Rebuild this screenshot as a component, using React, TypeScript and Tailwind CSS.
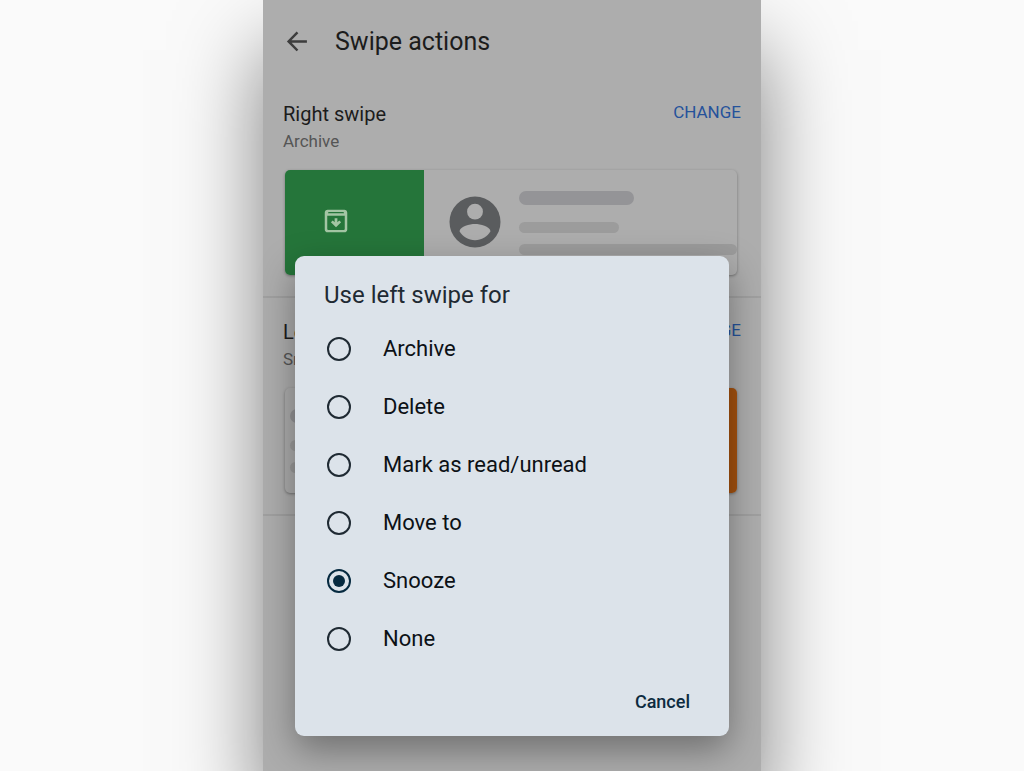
import { useState } from "react";
import { clsx } from "clsx";

const OPTIONS = ["Archive", "Delete", "Mark as read/unread", "Move to", "Snooze", "None"];

const ArchiveIcon = () => (
  <svg viewBox="0 0 24 24" className="w-[30px] h-[30px]" fill="#a3c5a4" aria-hidden="true">
    <path d="M18.700 3H5.300C4 3 3 4 3 5.300v13.400C3 20 4 21 5.300 21h13.400c1.300 0 2.300-1 2.300-2.300V5.300C21 4 20 3 18.700 3Zm.3 15.300c0 .5-.3.8-.8.800H5.800c-.5 0-.8-.3-.8-.8V7.800h14v10.500ZM5.600 5.600c0-.5.3-.8.8-.8h11.200c.5 0 .8.3.8.800v.1H5.600v-.1Z" />
    <path d="M10.900 9.800h2.200v3.100l1.500-1.400 1.500 1.500L12 17l-4.100-4 1.500-1.500 1.500 1.400V9.800Z" />
  </svg>
);

const AvatarIcon = () => (
  <svg viewBox="0 0 52 52" className="w-[52px] h-[52px] shrink-0" aria-hidden="true">
    <circle cx="26" cy="26" r="25.5" fill="#5a5c5e" />
    <circle cx="26" cy="15.700" r="7.900" fill="#adadad" />
    <path d="M10.500 35.200c1-5 10-7.100 15.500-7.100s14.500 2.100 15.500 7.100C38.300 40.600 32.500 44.200 26 44.200s-12.300-3.600-15.500-9Z" fill="#adadad" />
  </svg>
);

const MessageLines = ({ className }: { className?: string }) => (
  <div className={clsx("flex flex-col pt-[21px]", className)}>
    <div className="h-[14px] w-[115px] rounded-full bg-[#949497]" />
    <div className="mt-[17px] h-[11px] w-[100px] rounded-full bg-[#9c9c9c]" />
    <div className="mt-[11px] h-[11px] rounded-full bg-[#9b9b9b]" />
  </div>
);

const SwipeSection = ({
  title,
  value,
  children,
}: {
  title: string;
  value: string;
  children: React.ReactNode;
}) => {
  return (
    <section className="border-b-2 border-[#a0a0a0] px-5 py-5">
      <div className="flex items-start justify-between">
        <div>
          <h2 className="text-[20px] leading-7 text-[#1c1c1c]">{title}</h2>
          <p className="text-[17px] leading-[26px] text-[#555]">{value}</p>
        </div>
        <button type="button" className="text-[17px] leading-6 text-[#25529b]">
          CHANGE
        </button>
      </div>
      <div className="mt-4 ml-[2px] mr-1 h-[105px] mb-px flex overflow-hidden rounded-[5px] bg-[#adadad] shadow-[0_1px_3px_rgba(0,0,0,0.35)]">
        {children}
      </div>
    </section>
  );
};

export default function App() {
  const [selected, setSelected] = useState("Snooze");

  return (
    <div className="min-h-screen overflow-hidden bg-[#fafafa] font-[Roboto,sans-serif]">
      <main className="relative mx-auto min-h-screen max-w-[498px] bg-[#adadad] shadow-[0_50px_80px_rgba(0,0,0,0.5)]">
        <header className="flex h-20 items-center gap-6 pl-5 pt-1">
          <button type="button" aria-label="Back">
            <svg viewBox="0 0 24 24" className="w-7 h-7" fill="none" stroke="#3d3d3d" strokeWidth="2.1" aria-hidden="true">
              <path d="M20.500 11.500H5M12.400 3.700 4.800 11.500l7.600 7.800" />
            </svg>
          </button>
          <h1 className="text-[25px] leading-8 text-[#1c1c1c]">Swipe actions</h1>
        </header>

        <SwipeSection title="Right swipe" value="Archive">
          <div className="flex w-[139px] shrink-0 items-center bg-[#25753a] pb-[3px] pl-9">
            <ArchiveIcon />
          </div>
          <div className="flex flex-1 pl-[25px]">
            <div className="flex items-center pb-px">
              <AvatarIcon />
            </div>
            <MessageLines className="flex-1 pl-[18px]" />
          </div>
        </SwipeSection>

        <SwipeSection title="Left swipe" value="Snooze">
          <MessageLines className="flex-1 pl-[5px]" />
          <div className="w-[139px] shrink-0 bg-[#a5520f]" />
        </SwipeSection>

        {/* dialog */}
        <div
          role="dialog"
          aria-labelledby="dialog-title"
          className="absolute inset-x-8 top-64 rounded-[9px] bg-[#dce3ea] px-[29px] pt-[23px] pb-[18px] shadow-[0_14px_36px_rgba(0,0,0,0.36)]"
        >
          <h2 id="dialog-title" className="text-[24px] leading-8 text-[#1f2a33]">
            Use left swipe for
          </h2>
          <div className="mt-[9px]">
            {OPTIONS.map((option) => (
              <label key={option} className="flex h-[58px] items-center gap-8 pl-[3px] text-[22px] leading-7 text-[#0c1116]">
                <input
                  type="radio"
                  name="left-swipe"
                  checked={selected === option}
                  onChange={() => setSelected(option)}
                  className="grid h-6 w-6 appearance-none place-content-center rounded-full border-2 border-[#1f2a33] before:hidden before:h-3 before:w-3 before:rounded-full before:bg-[#062a40] checked:border-[#062a40] checked:before:block"
                />
                {option}
              </label>
            ))}
          </div>
          <div className="flex justify-end pt-[18px] pr-[10px]">
            <button type="button" className="text-[18px] leading-8 font-medium text-[#0d2b40]">
              Cancel
            </button>
          </div>
        </div>
      </main>
    </div>
  );
}
